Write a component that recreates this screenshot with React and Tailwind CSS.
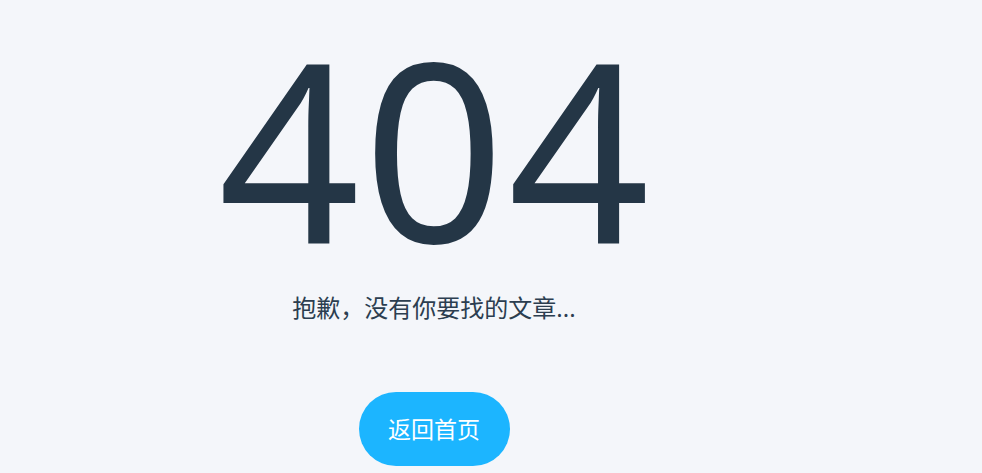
export default function App() {
  return (
    <div className="min-h-[473px] w-full bg-[#f4f6fa] overflow-hidden" style={{ fontFamily: '"Noto Sans", "Noto Sans CJK SC", sans-serif' }}>
      <div className="w-[868px] flex flex-col items-center">
        <div className="text-[248px] leading-none text-[#243646] mt-[23px] h-[248px] tracking-[3px] pl-[3px]">404</div>
        <div className="mt-[21px] text-[24px] leading-[32px] text-[#2c3e50]">抱歉，没有你要找的文章...</div>
        <button className="mt-[68px] w-[151px] h-[74px] rounded-full bg-[#1cb5ff] text-white text-[23px]">返回首页</button>
      </div>
    </div>
  );
}
